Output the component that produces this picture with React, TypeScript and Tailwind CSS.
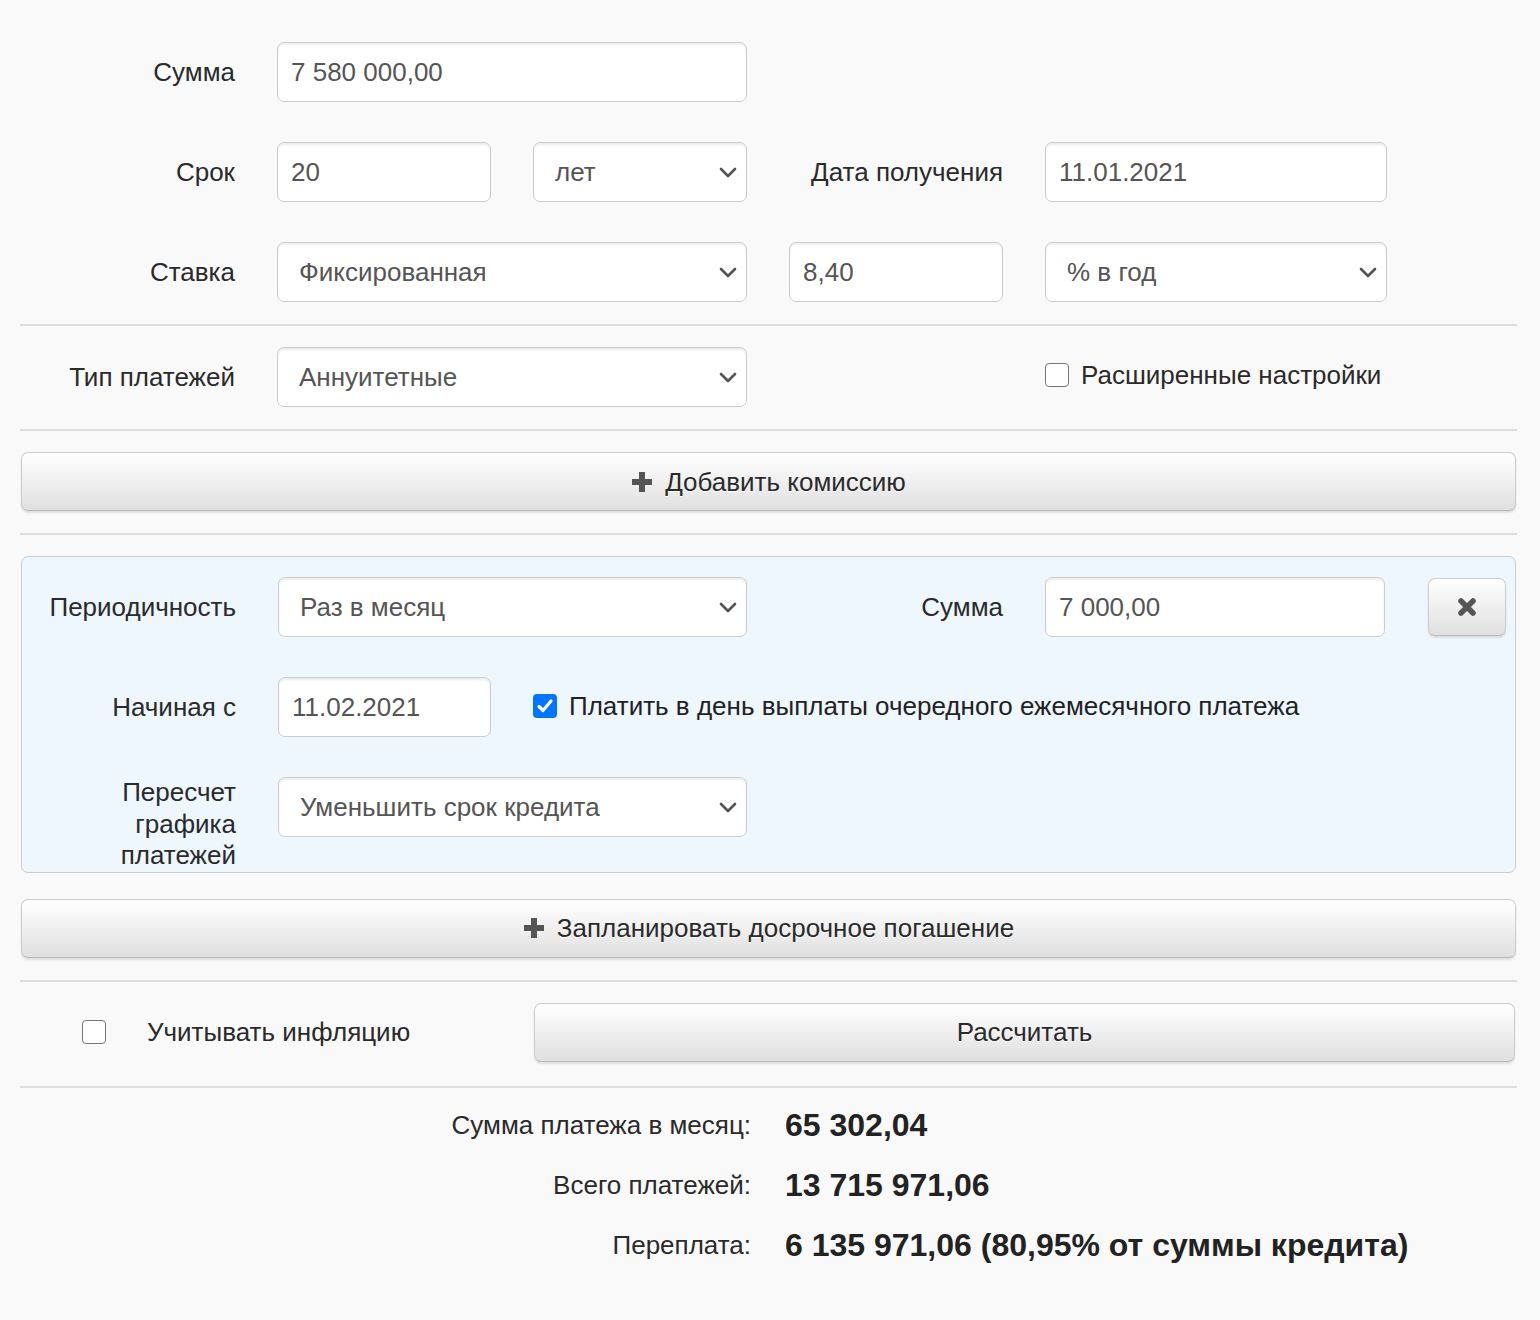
import React from "react";

const Chevron = () => (
  <svg width="18" height="11" viewBox="0 0 18 11" className="shrink-0">
    <path d="M2 2 L9 9 L16 2" fill="none" stroke="#555" strokeWidth="2.6" strokeLinecap="round" strokeLinejoin="round" />
  </svg>
);

const Input = ({ value, w }: { value: string; w: string }) => (
  <div
    className={`${w} h-[60px] shrink-0 flex items-center pl-[13px] bg-white border border-[#cccccc] rounded-[7px] shadow-[inset_0_2px_2px_rgba(0,0,0,0.075)] text-[#555] overflow-hidden whitespace-nowrap`}
  >
    {value}
  </div>
);

const Select = ({ value, w }: { value: string; w: string }) => (
  <div
    className={`${w} h-[60px] shrink-0 flex items-center justify-between pl-[21px] pr-[9px] bg-white border border-[#cccccc] rounded-[7px] shadow-[inset_0_2px_2px_rgba(0,0,0,0.075)] text-[#555] whitespace-nowrap`}
  >
    <span>{value}</span>
    <Chevron />
  </div>
);

const Label = ({ children, w = "w-[215px]" }: { children: React.ReactNode; w?: string }) => (
  <div className={`${w} shrink-0 text-right text-[#2a2a2a] whitespace-nowrap`}>{children}</div>
);

const Checkbox = ({ checked = false }: { checked?: boolean }) =>
  checked ? (
    <div className="w-[24px] h-[24px] shrink-0 rounded-[4px] bg-[#0075ff] flex items-center justify-center">
      <svg width="18" height="16" viewBox="0 0 18 16">
        <path d="M3 8.5 L7 12.5 L15 3" fill="none" stroke="white" strokeWidth="3.2" strokeLinecap="round" strokeLinejoin="round" />
      </svg>
    </div>
  ) : (
    <div className="w-[24px] h-[24px] shrink-0 rounded-[4px] bg-white border-[1.5px] border-[#767676]" />
  );

const Plus = () => (
  <svg width="22" height="22" viewBox="0 0 22 22" className="shrink-0">
    <path d="M8 1 h6 v7 h7 v6 h-7 v7 h-6 v-7 h-7 v-6 h7 z" fill="#555" />
  </svg>
);

const Divider = () => <div className="h-[2px] bg-[#dedede] mt-[22px] mb-[21px]" />;

const GradButton = ({ children, className = "" }: { children: React.ReactNode; className?: string }) => (
  <div
    className={`h-[59px] flex items-center justify-center gap-[12px] rounded-[7px] border border-[#cccccc] border-b-[#b8b8b8] bg-gradient-to-b from-white to-[#e0e0e0] shadow-[0_2px_2px_rgba(0,0,0,0.1)] text-[#2a2a2a] [text-shadow:0_1px_0_#fff] ${className}`}
  >
    {children}
  </div>
);

export default function App() {
  return (
    <div className="min-h-[1320px] bg-[#f9f9f9] font-['Liberation_Sans',Arial,sans-serif] text-[26px] leading-[32px] text-[#2a2a2a]">
      <div className="ml-[20px] w-[1497px] pt-[42px]">
        {/* Row 1 */}
        <div className="flex items-center gap-[42px] h-[60px]">
          <Label>Сумма</Label>
          <Input value="7 580 000,00" w="w-[470px]" />
        </div>
        {/* Row 2 */}
        <div className="flex items-center gap-[42px] h-[60px] mt-[40px]">
          <Label>Срок</Label>
          <Input value="20" w="w-[214px]" />
          <Select value="лет" w="w-[214px]" />
          <Label w="w-[214px]">Дата получения</Label>
          <Input value="11.01.2021" w="w-[342px]" />
        </div>
        {/* Row 3 */}
        <div className="flex items-center gap-[42px] h-[60px] mt-[40px]">
          <Label>Ставка</Label>
          <Select value="Фиксированная" w="w-[470px]" />
          <Input value="8,40" w="w-[214px]" />
          <Select value="% в год" w="w-[342px]" />
        </div>

        <Divider />

        {/* Row 4 */}
        <div className="flex items-center gap-[42px] h-[60px]">
          <Label>Тип платежей</Label>
          <Select value="Аннуитетные" w="w-[470px]" />
          <div className="w-[214px] shrink-0" />
          <div className="flex items-center gap-[12px] -mt-[4px]">
            <Checkbox />
            <span className="whitespace-nowrap">Расширенные настройки</span>
          </div>
        </div>

        <Divider />

        <GradButton className="mx-[1px]">
          <Plus />
          <span>Добавить комиссию</span>
        </GradButton>

        <Divider />

        {/* Blue panel */}
        <div className="mx-[1px] bg-[#eef6fe] border border-[#c8cdd2] rounded-[7px] pt-[20px] pb-0">
          <div className="flex items-center gap-[42px] h-[60px]">
            <Label w="w-[214px]">Периодичность</Label>
            <Select value="Раз в месяц" w="w-[469px]" />
            <Label w="w-[214px]">Сумма</Label>
            <Input value="7 000,00" w="w-[340px]" />
            <div className="ml-[1px] w-[78px] h-[58px] shrink-0 flex items-center justify-center rounded-[7px] border border-[#cccccc] border-b-[#b8b8b8] bg-gradient-to-b from-white to-[#e0e0e0] shadow-[0_2px_2px_rgba(0,0,0,0.1)]">
              <svg width="22" height="22" viewBox="0 0 22 22">
                <path d="M5 5 L17 17 M17 5 L5 17" stroke="#555" strokeWidth="5.5" strokeLinecap="round" />
              </svg>
            </div>
          </div>
          <div className="flex items-center gap-[42px] h-[60px] mt-[40px]">
            <Label w="w-[214px]">Начиная с</Label>
            <Input value="11.02.2021" w="w-[213px]" />
            <div className="flex items-center gap-[12px] -mt-[2px]">
              <Checkbox checked />
              <span className="whitespace-nowrap text-[#222]">
                Платить в день выплаты очередного ежемесячного платежа
              </span>
            </div>
          </div>
          <div className="flex items-start gap-[42px] mt-[40px]">
            <div className="w-[214px] shrink-0 text-right leading-[31.5px] text-[#2a2a2a]">
              Пересчет
              <br />
              графика
              <br />
              платежей
            </div>
            <Select value="Уменьшить срок кредита" w="w-[469px]" />
          </div>
        </div>

        <GradButton className="mx-[1px] mt-[26px]">
          <Plus />
          <span>Запланировать досрочное погашение</span>
        </GradButton>

        <Divider />

        {/* Bottom row */}
        <div className="flex items-center h-[59px]">
          <div className="ml-[62px] flex items-center">
            <Checkbox />
            <span className="ml-[41px] whitespace-nowrap">Учитывать инфляцию</span>
          </div>
          <div className="ml-auto mr-[2px] w-[981px]">
            <GradButton>
              <span>Рассчитать</span>
            </GradButton>
          </div>
        </div>

        <div className="h-[2px] bg-[#dedede] mt-[24px]" />

        {/* Results */}
        <div className="mt-[7px]">
          {[
            ["Сумма платежа в месяц:", "65 302,04"],
            ["Всего платежей:", "13 715 971,06"],
            ["Переплата:", "6 135 971,06 (80,95% от суммы кредита)"],
          ].map(([l, v]) => (
            <div key={l} className="flex items-center h-[60px]">
              <div className="w-[731px] text-right whitespace-nowrap">{l}</div>
              <div className="ml-[34px] font-bold text-[32px] text-[#222] whitespace-nowrap">{v}</div>
            </div>
          ))}
        </div>
      </div>
    </div>
  );
}
